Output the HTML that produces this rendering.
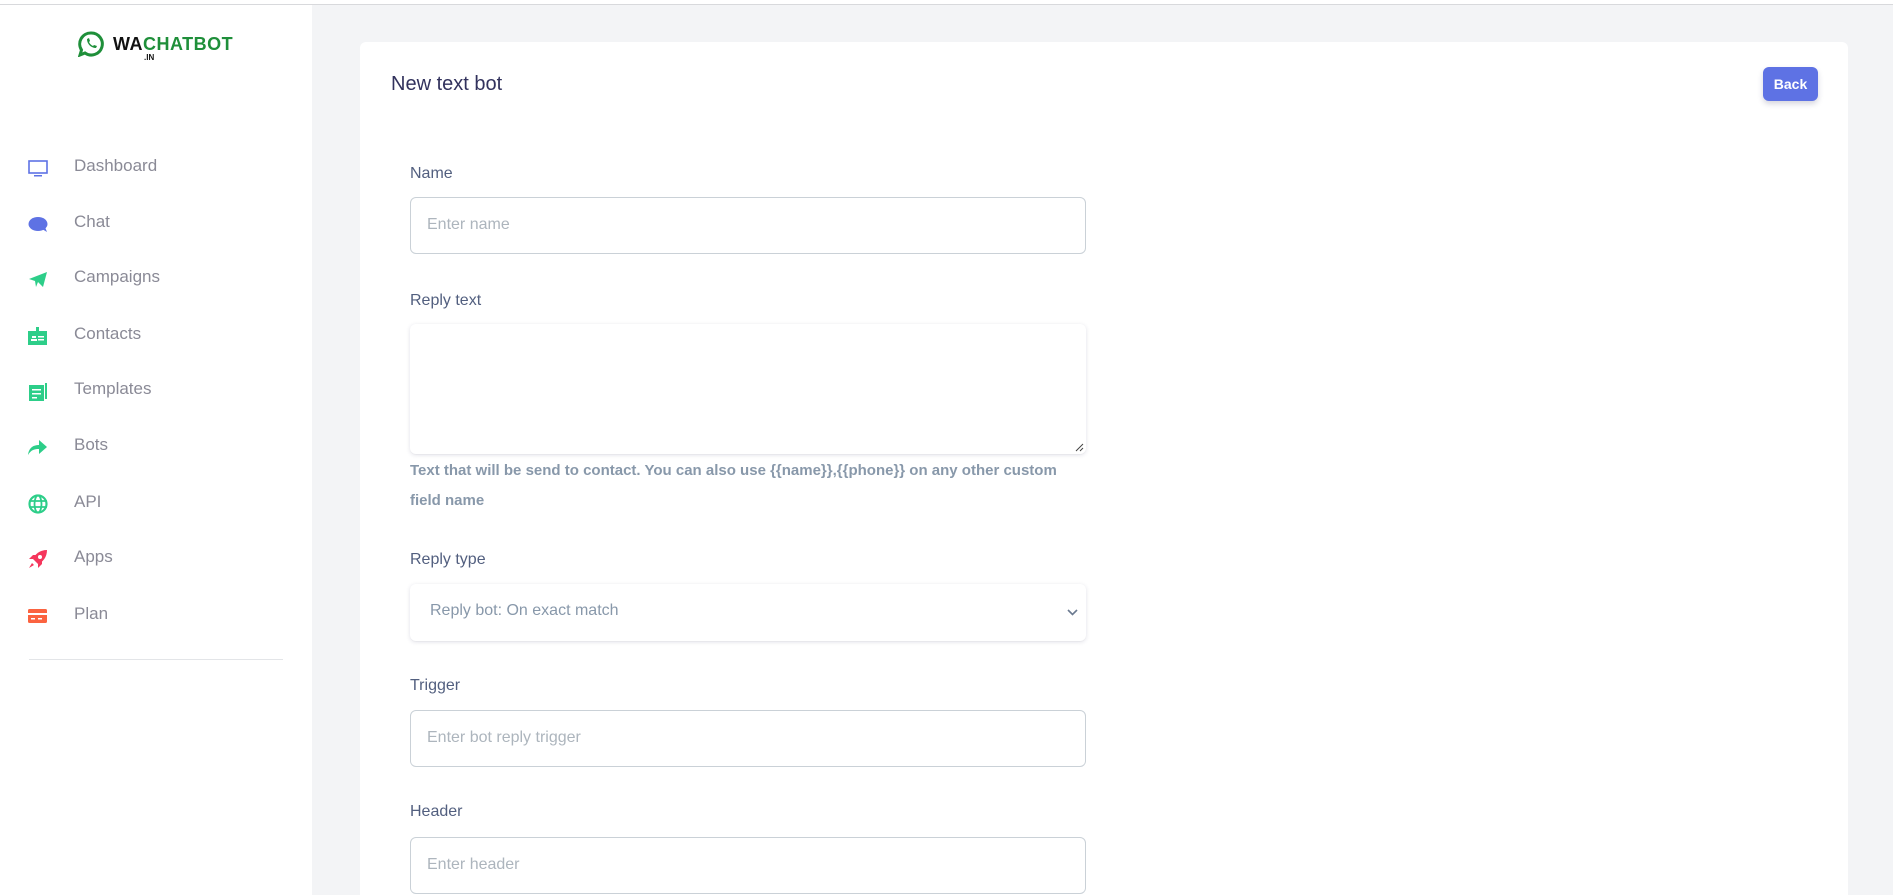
<!DOCTYPE html>
<html><head><meta charset="utf-8"><style>
*{box-sizing:border-box;margin:0;padding:0}
html{width:1893px;height:895px;overflow:hidden}
body{width:1893px;height:895px;overflow:hidden;background:#f3f4f6;font-family:"Liberation Sans",sans-serif;position:relative}
.topline{position:absolute;left:0;top:0;width:1893px;height:5px;background:#fff;border-bottom:1px solid #d8d9dc}
.side{position:absolute;left:0;top:5px;width:312px;height:890px;background:#fff}
.item{position:absolute;left:0;height:30px;width:312px}
.item svg{position:absolute;left:28px;top:5px}
.item span{position:absolute;left:74px;top:3px;font-size:17px;color:#8a8a96}
.card{position:absolute;left:360px;top:42px;width:1488px;height:853px;background:#fff;border-radius:6px 6px 0 0}
.title{position:absolute;left:391px;top:73px;font-size:20px;color:#32325d}
.back{position:absolute;left:1763px;top:67px;width:55px;height:34px;background:#5e72e4;border-radius:6px;color:#fff;font-weight:bold;font-size:14px;text-align:center;line-height:34px;box-shadow:0 3px 6px rgba(50,50,93,.2)}
.lbl{position:absolute;left:410px;font-size:16px;color:#525f7f}
.inp{position:absolute;left:410px;width:676px;height:57px;border:1px solid #cad1d7;border-radius:6px;background:#fff;font-size:16px;color:#adb5bd;padding:18px 16px}
.sh{border:none;box-shadow:0 1px 4px rgba(50,50,93,.15),0 1px 0 rgba(0,0,0,.02)}
.help{position:absolute;left:410px;font-size:15px;color:#8898aa;font-weight:bold;white-space:nowrap}
</style></head><body>
<div class="topline"></div>
<div class="side">
 <svg style="position:absolute;left:78px;top:26px" width="26" height="26" viewBox="0 0 26 26"><path d="M13 2a11 11 0 1 1-6 20l-5 2 1.5-5A11 11 0 0 1 13 2z" fill="none" stroke="#1f8f3a" stroke-width="3"/><path d="M9 8c0 5 4 9 9 9l1-2-3-1-1 1c-2-1-3-2-4-4l1-1-1-3z" fill="#1f8f3a"/></svg>
 <div style="position:absolute;left:113px;top:29px;font-size:18px;font-weight:900;letter-spacing:0.5px"><span style="color:#111">WA</span><span style="color:#1f8f3a">CHATBOT</span></div>
 <div style="position:absolute;left:144px;top:48px;font-size:8px;font-weight:bold;color:#111">.IN</div>
 <div class="item" style="top:148px"><svg width="20" height="20" viewBox="0 0 20 20"><rect x="1" y="3" width="18" height="12" fill="none" stroke="#5e72e4" stroke-width="1.6"/><rect x="6" y="17" width="8" height="1.5" fill="#5e72e4"/></svg><span>Dashboard</span></div>
 <div class="item" style="top:204px"><svg width="20" height="20" viewBox="0 0 20 20"><ellipse cx="10" cy="10" rx="9.5" ry="7" fill="#5e72e4"/><path d="M14 15l5 3-2-5z" fill="#5e72e4"/></svg><span>Chat</span></div>
 <div class="item" style="top:259px"><svg width="20" height="20" viewBox="0 0 20 20"><path d="M1 10L19 3 15 18 10 13 8 18 7 12z" fill="#2dce89"/></svg><span>Campaigns</span></div>
 <div class="item" style="top:316px"><svg width="20" height="20" viewBox="0 0 20 20"><rect x="0" y="5" width="19" height="14" fill="#2dce89"/><rect x="8" y="1" width="3" height="5" fill="#2dce89"/><rect x="4" y="10" width="4" height="2" fill="#fff"/><rect x="10" y="10" width="6" height="1.5" fill="#fff"/><rect x="10" y="13" width="6" height="1.5" fill="#fff"/><rect x="3" y="13" width="6" height="2" fill="#fff"/></svg><span>Contacts</span></div>
 <div class="item" style="top:371px"><svg width="20" height="20" viewBox="0 0 20 20"><rect x="1" y="4" width="15" height="16" fill="#2dce89"/><rect x="17" y="2" width="2" height="16" fill="#2dce89"/><rect x="4" y="8" width="9" height="1.5" fill="#fff"/><rect x="4" y="12" width="9" height="1.5" fill="#fff"/><rect x="4" y="16" width="5" height="1.5" fill="#fff"/></svg><span>Templates</span></div>
 <div class="item" style="top:427px"><svg width="20" height="20" viewBox="0 0 20 20"><path d="M0 18C1 10 6 8 11 8V3l8 7-8 7v-5C6 12 3 13 0 18z" fill="#2dce89"/></svg><span>Bots</span></div>
 <div class="item" style="top:484px"><svg width="20" height="20" viewBox="0 0 20 20"><circle cx="10" cy="10" r="8.5" fill="none" stroke="#2dce89" stroke-width="2.2"/><ellipse cx="10" cy="10" rx="3.5" ry="8.5" fill="none" stroke="#2dce89" stroke-width="1.8"/><path d="M1 7h18M1 13h18" stroke="#2dce89" stroke-width="1.8"/></svg><span>API</span></div>
 <div class="item" style="top:539px"><svg width="20" height="20" viewBox="0 0 20 20"><path d="M19 1C12 1 7 5 5 10l5 5c5-2 9-7 9-14z" fill="#f5365c"/><path d="M5 10L1 10l4-4h4zM10 15v4l4-4v-4z" fill="#f5365c"/><circle cx="12" cy="8" r="2" fill="#fff"/><path d="M4 14l-3 5 5-3z" fill="#f5365c"/></svg><span>Apps</span></div>
 <div class="item" style="top:596px"><svg width="20" height="20" viewBox="0 0 20 20"><rect x="0" y="3" width="19" height="14" rx="1.5" fill="#fb6340"/><rect x="0" y="7" width="19" height="2" fill="#fff"/><rect x="3" y="12" width="4" height="1.5" fill="#fff"/><rect x="10" y="12" width="4" height="1.5" fill="#fff"/></svg><span>Plan</span></div>
 <div style="position:absolute;left:29px;top:654px;width:254px;height:1px;background:#e3e5e8"></div>
</div>
<div class="card"></div>
<div class="title">New text bot</div>
<div class="back">Back</div>
<div class="lbl" style="top:165px">Name</div>
<div class="inp" style="top:197px">Enter name</div>
<div class="lbl" style="top:292px">Reply text</div>
<div class="inp sh" style="top:324px;height:130px"><svg style="position:absolute;right:2px;bottom:2px" width="10" height="10"><path d="M9 2L2 9M9 6L6 9" stroke="#444" stroke-width="1"/></svg></div>
<div class="help" style="top:462px">Text that will be send to contact. You can also use {{name}},{{phone}} on any other custom</div>
<div class="help" style="top:492px">field name</div>
<div class="lbl" style="top:551px">Reply type</div>
<div class="inp sh" style="top:584px;color:#8898aa;padding-left:20px">Reply bot: On exact match<svg style="position:absolute;right:8px;top:25px" width="11" height="8"><path d="M1 1l4.5 4.5L10 1" fill="none" stroke="#6b7a90" stroke-width="1.6"/></svg></div>
<div class="lbl" style="top:677px">Trigger</div>
<div class="inp" style="top:710px">Enter bot reply trigger</div>
<div class="lbl" style="top:803px">Header</div>
<div class="inp" style="top:837px">Enter header</div>
</body></html>
